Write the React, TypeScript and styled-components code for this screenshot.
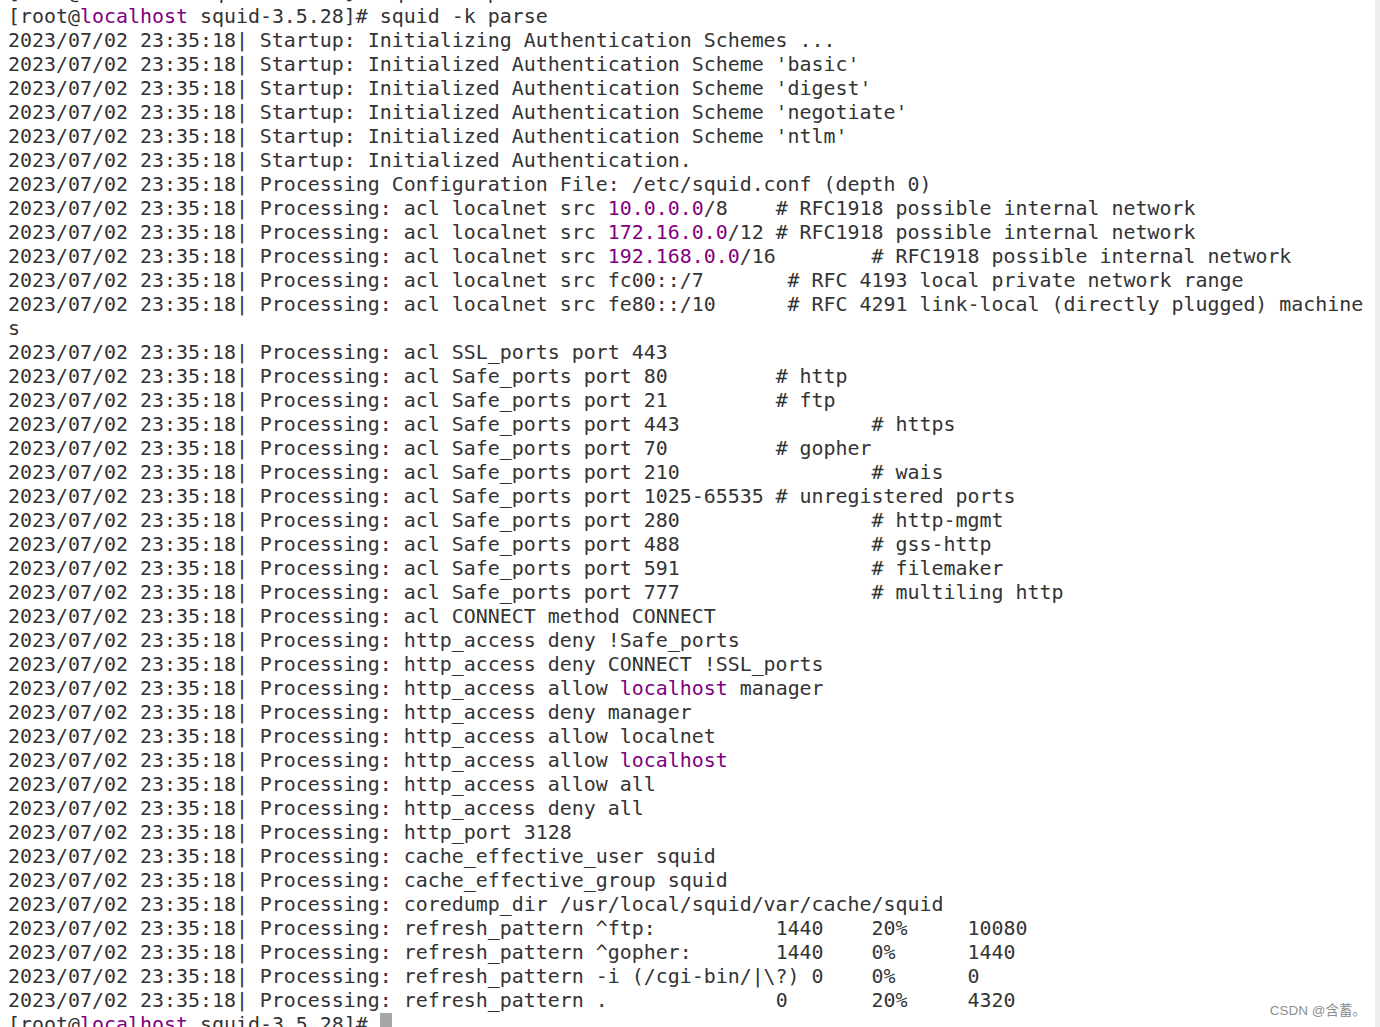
import React from "react";
import styled, { createGlobalStyle } from "styled-components";

const GlobalStyle = createGlobalStyle`
  html, body {
    margin: 0;
    padding: 0;
    background: #ffffff;
    overflow: hidden;
  }
`;

const Window = styled.div`
  position: relative;
  width: 1380px;
  height: 1027px;
  display: flex;
  overflow: hidden;
  background: #ffffff;
`;

const Screen = styled.div`
  flex: 1;
  margin-top: -19px;
  padding-left: 8px;
  font-family: "DejaVu Sans Mono", monospace;
  font-size: 19.93px;
  line-height: 24px;
  color: #333333;
  white-space: pre;
  tab-size: 8;
`;

const Line = styled.div`
  height: 24px;
`;

const Hl = styled.span`
  color: #800080;
`;

const Cursor = styled.span`
  display: inline-block;
  width: 12px;
  height: 24px;
  vertical-align: top;
  background: #a6a6a6;
`;

const Scrollbar = styled.div`
  width: 5px;
  background: #efefef;
`;

const Watermark = styled.div`
  position: absolute;
  right: 14px;
  bottom: 8px;
  font-family: "Liberation Sans", "Noto Sans CJK SC", sans-serif;
  font-size: 13.5px;
  color: #8f8f8f;
`;

const TS = "2023/07/02 23:35:18| ";

type Seg = string | { hl: string };

const Prompt = ({ cmd, cursor }: { cmd?: string; cursor?: boolean }) => (
  <Line>
    [root@<Hl>localhost</Hl> squid-3.5.28]# {cmd}
    {cursor && <Cursor />}
  </Line>
);

const lines: Seg[][] = [
  [TS + "Startup: Initializing Authentication Schemes ..."],
  [TS + "Startup: Initialized Authentication Scheme 'basic'"],
  [TS + "Startup: Initialized Authentication Scheme 'digest'"],
  [TS + "Startup: Initialized Authentication Scheme 'negotiate'"],
  [TS + "Startup: Initialized Authentication Scheme 'ntlm'"],
  [TS + "Startup: Initialized Authentication."],
  [TS + "Processing Configuration File: /etc/squid.conf (depth 0)"],
  [TS + "Processing: acl localnet src ", { hl: "10.0.0.0" }, "/8\t# RFC1918 possible internal network"],
  [TS + "Processing: acl localnet src ", { hl: "172.16.0.0" }, "/12\t# RFC1918 possible internal network"],
  [TS + "Processing: acl localnet src ", { hl: "192.168.0.0" }, "/16\t# RFC1918 possible internal network"],
  [TS + "Processing: acl localnet src fc00::/7       # RFC 4193 local private network range"],
  [TS + "Processing: acl localnet src fe80::/10      # RFC 4291 link-local (directly plugged) machine"],
  ["s"],
  [TS + "Processing: acl SSL_ports port 443"],
  [TS + "Processing: acl Safe_ports port 80\t\t# http"],
  [TS + "Processing: acl Safe_ports port 21\t\t# ftp"],
  [TS + "Processing: acl Safe_ports port 443\t\t# https"],
  [TS + "Processing: acl Safe_ports port 70\t\t# gopher"],
  [TS + "Processing: acl Safe_ports port 210\t\t# wais"],
  [TS + "Processing: acl Safe_ports port 1025-65535 # unregistered ports"],
  [TS + "Processing: acl Safe_ports port 280\t\t# http-mgmt"],
  [TS + "Processing: acl Safe_ports port 488\t\t# gss-http"],
  [TS + "Processing: acl Safe_ports port 591\t\t# filemaker"],
  [TS + "Processing: acl Safe_ports port 777\t\t# multiling http"],
  [TS + "Processing: acl CONNECT method CONNECT"],
  [TS + "Processing: http_access deny !Safe_ports"],
  [TS + "Processing: http_access deny CONNECT !SSL_ports"],
  [TS + "Processing: http_access allow ", { hl: "localhost" }, " manager"],
  [TS + "Processing: http_access deny manager"],
  [TS + "Processing: http_access allow localnet"],
  [TS + "Processing: http_access allow ", { hl: "localhost" }],
  [TS + "Processing: http_access allow all"],
  [TS + "Processing: http_access deny all"],
  [TS + "Processing: http_port 3128"],
  [TS + "Processing: cache_effective_user squid"],
  [TS + "Processing: cache_effective_group squid"],
  [TS + "Processing: coredump_dir /usr/local/squid/var/cache/squid"],
  [TS + "Processing: refresh_pattern ^ftp:\t\t1440\t20%\t10080"],
  [TS + "Processing: refresh_pattern ^gopher:\t1440\t0%\t1440"],
  [TS + "Processing: refresh_pattern -i (/cgi-bin/|\\?) 0\t0%\t0"],
  [TS + "Processing: refresh_pattern .\t\t0\t20%\t4320"],
];

const App = () => {
  return (
    <>
      <GlobalStyle />
      <Window>
        <Screen>
          <Prompt cmd="squid -k parse" />
          <Prompt cmd="squid -k parse" />
          {lines.map((segs, i) => (
            <Line key={i}>
              {segs.map((s, j) =>
                typeof s === "string" ? s : <Hl key={j}>{s.hl}</Hl>
              )}
            </Line>
          ))}
          <Prompt cursor />
        </Screen>
        <Scrollbar />
        <Watermark>CSDN @含蓄。</Watermark>
      </Window>
    </>
  );
};

export default App;
